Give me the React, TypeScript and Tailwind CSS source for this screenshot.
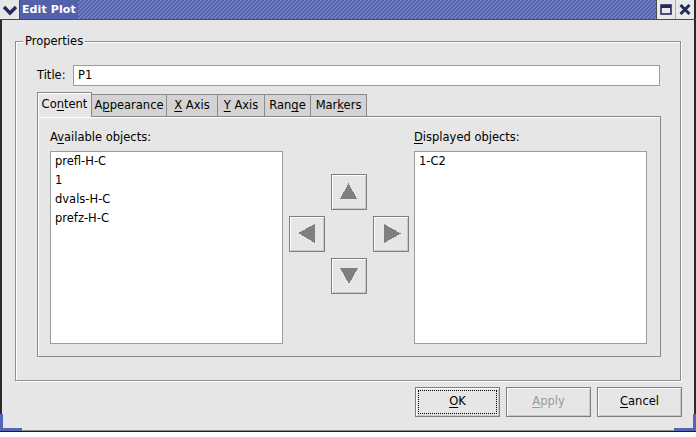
import React from 'react'

// underlined mnemonic letter
const U = ({ children }: { children: React.ReactNode }) => (
  <span className="underline decoration-1 underline-offset-[2px]">{children}</span>
)

const tabs = [
  { w: 'w-[51px]', label: <><U>X</U> Axis</> },
  { w: 'w-[47px]', label: <><U>Y</U> Axis</> },
  { w: 'w-[46px]', label: <>Ran<U>g</U>e</> },
  { w: 'w-[56px]', label: <>Mar<U>k</U>ers</> },
]

const ArrowBtn = ({ points }: { points: string }) => (
  <button className="w-[36px] h-[36px] p-0 border border-[#7e7e7e] bg-[#e6e6e6] shadow-[inset_1px_1px_0_#ffffff,inset_-1px_-1px_0_#c8c8c8] flex items-center justify-center">
    <svg width="34" height="34" viewBox="1 1 34 34" shapeRendering="crispEdges">
      <polygon points={points} fill="#7f7f7f" />
    </svg>
  </button>
)

const DialogBtn = ({ children, focus, disabled }: { children: React.ReactNode; focus?: boolean; disabled?: boolean }) => (
  <button className={
    'w-[85px] h-[30px] p-[2px] border border-[#7e7e7e] bg-[#e6e6e6] shadow-[inset_1px_1px_0_#ffffff,inset_-1px_-1px_0_#c8c8c8] ' +
    (disabled ? 'text-[#9a9a9a]' : 'text-black')
  }>
    <div className={'w-full h-full flex items-center justify-center ' + (focus ? 'border border-dotted border-black' : 'border border-transparent')}>
      <span>{children}</span>
    </div>
  </button>
)

export default function App() {
  return (
    <div className="w-[696px] h-[437px] overflow-hidden flex flex-col bg-[#e6e6e6] text-[11.5px] text-black font-['DejaVu_Sans',sans-serif]">
      {/* title bar */}
      <div className="h-[20px] flex border-b border-[#4a4a4a] shadow-[inset_0_1px_0_#8f99d2]">
        <div className="w-[20px] h-full bg-[#e6e6e6] flex items-center justify-center border-r border-[#4a4a4a]">
          <svg width="16" height="12" viewBox="0 0 16 12">
            <polyline points="2,3 8,9 14,3" fill="none" stroke="#262b5e" strokeWidth="3.4" />
          </svg>
        </div>
        <div className="h-full px-[2px] bg-[#5360ab] text-white font-bold text-[11px] leading-[19px] tracking-[0.1px]">Edit Plot</div>
        <div className="flex-1 h-full bg-[repeating-linear-gradient(135deg,#5360ab_0px,#5360ab_1.8px,#7480c2_1.8px,#7480c2_2.83px)]" />
        <div className="w-[19px] h-full bg-[#e9e9e9] border-l border-[#4a4a4a] flex items-center justify-center">
          <svg width="12" height="11" viewBox="0 0 12 11">
            <rect x="1" y="1" width="10" height="9" fill="none" stroke="#262b5e" strokeWidth="1.6" />
            <rect x="1" y="1" width="10" height="3" fill="#262b5e" />
          </svg>
        </div>
        <div className="w-[19px] h-full bg-[#e9e9e9] border-l border-[#b0b0b0] flex items-center justify-center">
          <svg width="12" height="11" viewBox="0 0 12 11">
            <path d="M1.5 1 L10.5 10 M10.5 1 L1.5 10" stroke="#262b5e" strokeWidth="3" />
          </svg>
        </div>
        <div className="w-[2px] h-full bg-[#2a2a2a]" />
      </div>

      {/* window body */}
      <div className="relative h-[411px] flex flex-col border-l-2 border-r-2 border-b border-l-[#2a2a2a] border-r-[#2a2a2a] border-b-[#8c8c8c]">
        {/* Properties group */}
        <div className="relative mt-[21px] ml-[13px] w-[666px] h-[340px] border border-[#8e8e8e] shadow-[inset_1px_1px_0_#ffffff,1px_1px_0_#ffffff] pt-[23px] pl-[21px]">
          <div className="absolute left-[7px] top-[-9px] px-[2px] bg-[#e6e6e6] leading-[16px]">Properties</div>

          <div className="flex items-center">
            <div className="w-[36px]">Title:</div>
            <div className="w-[587px] h-[21px] bg-white border border-[#9c9c9c] pl-[4px] leading-[19px]">P1</div>
          </div>

          {/* tabs */}
          <div className="mt-[6px] flex items-end">
            <div className="relative z-10 w-[55px] h-[25px] -mb-px border border-b-0 border-[#8a8a8a] bg-[#e6e6e6] shadow-[inset_1px_1px_0_#ffffff] flex items-center justify-center pb-[1px]">
              <span>Co<U>n</U>tent</span>
            </div>
            <div className="w-[75px] h-[22px] border border-b-0 border-l-0 border-[#8a8a8a] bg-[#d3d3d3] flex items-center justify-center">
              <span>A<U>p</U>pearance</span>
            </div>
            {tabs.map((t, i) => (
              <div key={i} className={t.w + ' h-[22px] border border-b-0 border-l-0 border-[#8a8a8a] bg-[#d3d3d3] flex items-center justify-center'}>
                <span className="whitespace-pre">{t.label}</span>
              </div>
            ))}
          </div>

          {/* tab panel */}
          <div className="w-[624px] h-[241px] border border-[#8a8a8a] shadow-[inset_1px_1px_0_#ffffff] pt-[12px] pl-[12px] flex">
            <div className="w-[233px] flex flex-col">
              <div className="h-[16px] leading-[16px]">A<U>v</U>ailable objects:</div>
              <div className="mt-[6px] h-[193px] bg-white border border-[#9c9c9c] pl-[4px] leading-[19px]">
                <div>prefl-H-C</div>
                <div>1</div>
                <div>dvals-H-C</div>
                <div>prefz-H-C</div>
              </div>
            </div>

            <div className="w-[131px] flex justify-center pt-[45px]">
              <div className="grid grid-cols-[36px_36px_36px] grid-rows-[36px_36px_36px] gap-[6px] h-[120px]">
                <div />
                <ArrowBtn points="9,25 26,25 17.5,9" />
                <div />
                <ArrowBtn points="9,17 26,8 26,27" />
                <div />
                <ArrowBtn points="11,8 11,27 28,17.5" />
                <div />
                <ArrowBtn points="9,10 27,10 18,26" />
                <div />
              </div>
            </div>

            <div className="w-[233px] flex flex-col">
              <div className="h-[16px] leading-[16px]"><U>D</U>isplayed objects:</div>
              <div className="mt-[6px] h-[193px] bg-white border border-[#9c9c9c] pl-[4px] leading-[19px]">
                <div>1-C2</div>
              </div>
            </div>
          </div>
        </div>

        {/* dialog buttons */}
        <div className="mt-[6px] pr-[12px] flex justify-end gap-[6px]">
          <DialogBtn focus><U>O</U>K</DialogBtn>
          <DialogBtn disabled><U>A</U>pply</DialogBtn>
          <DialogBtn><U>C</U>ancel</DialogBtn>
        </div>

        {/* resize corner highlights */}
        <div className="absolute left-[-2px] bottom-[-1px] w-[22px] h-[17px] border-l-[3px] border-b-[3px] border-[#5664b4]" />
        <div className="absolute right-[-2px] bottom-[-1px] w-[22px] h-[17px] border-r-[3px] border-b-[3px] border-[#5664b4]" />
      </div>
      <div className="h-[1px] bg-[#1e1e1e]" />
      <div className="flex-1 bg-white" />
    </div>
  )
}
